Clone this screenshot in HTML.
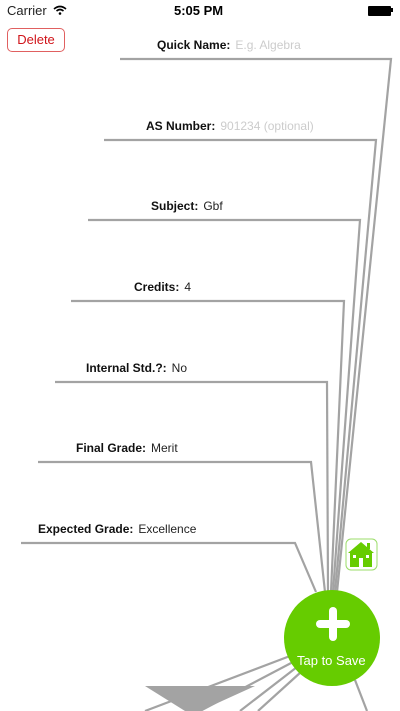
<!DOCTYPE html>
<html><head><meta charset="utf-8"><style>
body{margin:0;width:400px;height:711px;overflow:hidden;background:#fff;font-family:"Liberation Sans",sans-serif;position:relative}
.t{position:absolute;font-size:12px;color:#222;white-space:nowrap}
.t b{font-weight:bold;margin-right:5px;color:#111}
.ph{color:#ccc}
</style></head><body>
<svg width="400" height="711" style="position:absolute;left:0;top:0">
<g fill="none" stroke="#a3a3a3" stroke-width="2.2">
<polyline points="120,59 391,59 337,592"/>
<polyline points="104,140 376,140 335,592"/>
<polyline points="88,220 360,220 333,592"/>
<polyline points="71,301 344,301 331,592"/>
<polyline points="55,382 327,382 328,592"/>
<polyline points="38,462 311,462 325,592"/>
<polyline points="21,543 295,543 316,592"/>
<line x1="290" y1="656" x2="145" y2="711"/>
<line x1="293" y1="662" x2="200" y2="711"/>
<line x1="297" y1="667" x2="240" y2="711"/>
<line x1="301" y1="672" x2="258" y2="711"/>
<line x1="355" y1="680" x2="367" y2="711"/>
</g>
<polygon points="145,686 255,686 200,711 185,711" fill="#a3a3a3"/>
<circle cx="332" cy="638" r="48" fill="#66cc00"/>
<rect x="329" y="607" width="8" height="34" rx="4" fill="#fff"/>
<rect x="316" y="620" width="34" height="8" rx="4" fill="#fff"/>
<rect x="346" y="539" width="31" height="31" rx="5" fill="#fff" stroke="#9bdc6a" stroke-width="1"/>
<path d="M348 553 L361 542 L374 553 Z" fill="#66cc00"/>
<rect x="367" y="543" width="3" height="6" fill="#66cc00"/>
<rect x="350" y="552" width="22" height="15" fill="#66cc00"/>
<rect x="359" y="558" width="4" height="9" fill="#fff"/>
<rect x="353" y="555" width="3" height="3" fill="#fff"/>
<rect x="366" y="555" width="3" height="3" fill="#fff"/>
</svg>
<div class="t" style="left:7px;top:3px;font-size:13px">Carrier</div>
<svg style="position:absolute;left:53px;top:5px" width="14" height="10"><path d="M1 4 Q7 -1 13 4 M3.5 6 Q7 3 10.5 6" stroke="#000" stroke-width="1.6" fill="none"/><circle cx="7" cy="8.5" r="1.3"/></svg>
<div class="t" style="left:174px;top:3px;font-size:13px;font-weight:bold;color:#000">5:05 PM</div>
<div style="position:absolute;left:368px;top:6px;width:21px;height:8px;background:#000;border:1px solid #000;border-radius:1px"></div>
<div style="position:absolute;left:391px;top:8px;width:1.5px;height:4px;background:#000"></div>
<div style="position:absolute;left:7px;top:28px;width:56px;height:22px;border:1px solid #e06060;border-radius:5px;color:#d0141a;font-size:13px;line-height:22px;text-align:center">Delete</div>
<div class="t" style="left:157px;top:38px"><b>Quick Name:</b><span class="ph">E.g. Algebra</span></div>
<div class="t" style="left:146px;top:119px"><b>AS Number:</b><span class="ph">901234 (optional)</span></div>
<div class="t" style="left:151px;top:199px"><b>Subject:</b>Gbf</div>
<div class="t" style="left:134px;top:280px"><b>Credits:</b>4</div>
<div class="t" style="left:86px;top:361px"><b>Internal Std.?:</b>No</div>
<div class="t" style="left:76px;top:441px"><b>Final Grade:</b>Merit</div>
<div class="t" style="left:38px;top:522px"><b>Expected Grade:</b>Excellence</div>
<div class="t" style="left:297px;top:653px;color:#fff;font-size:13px">Tap to Save</div>
</body></html>
